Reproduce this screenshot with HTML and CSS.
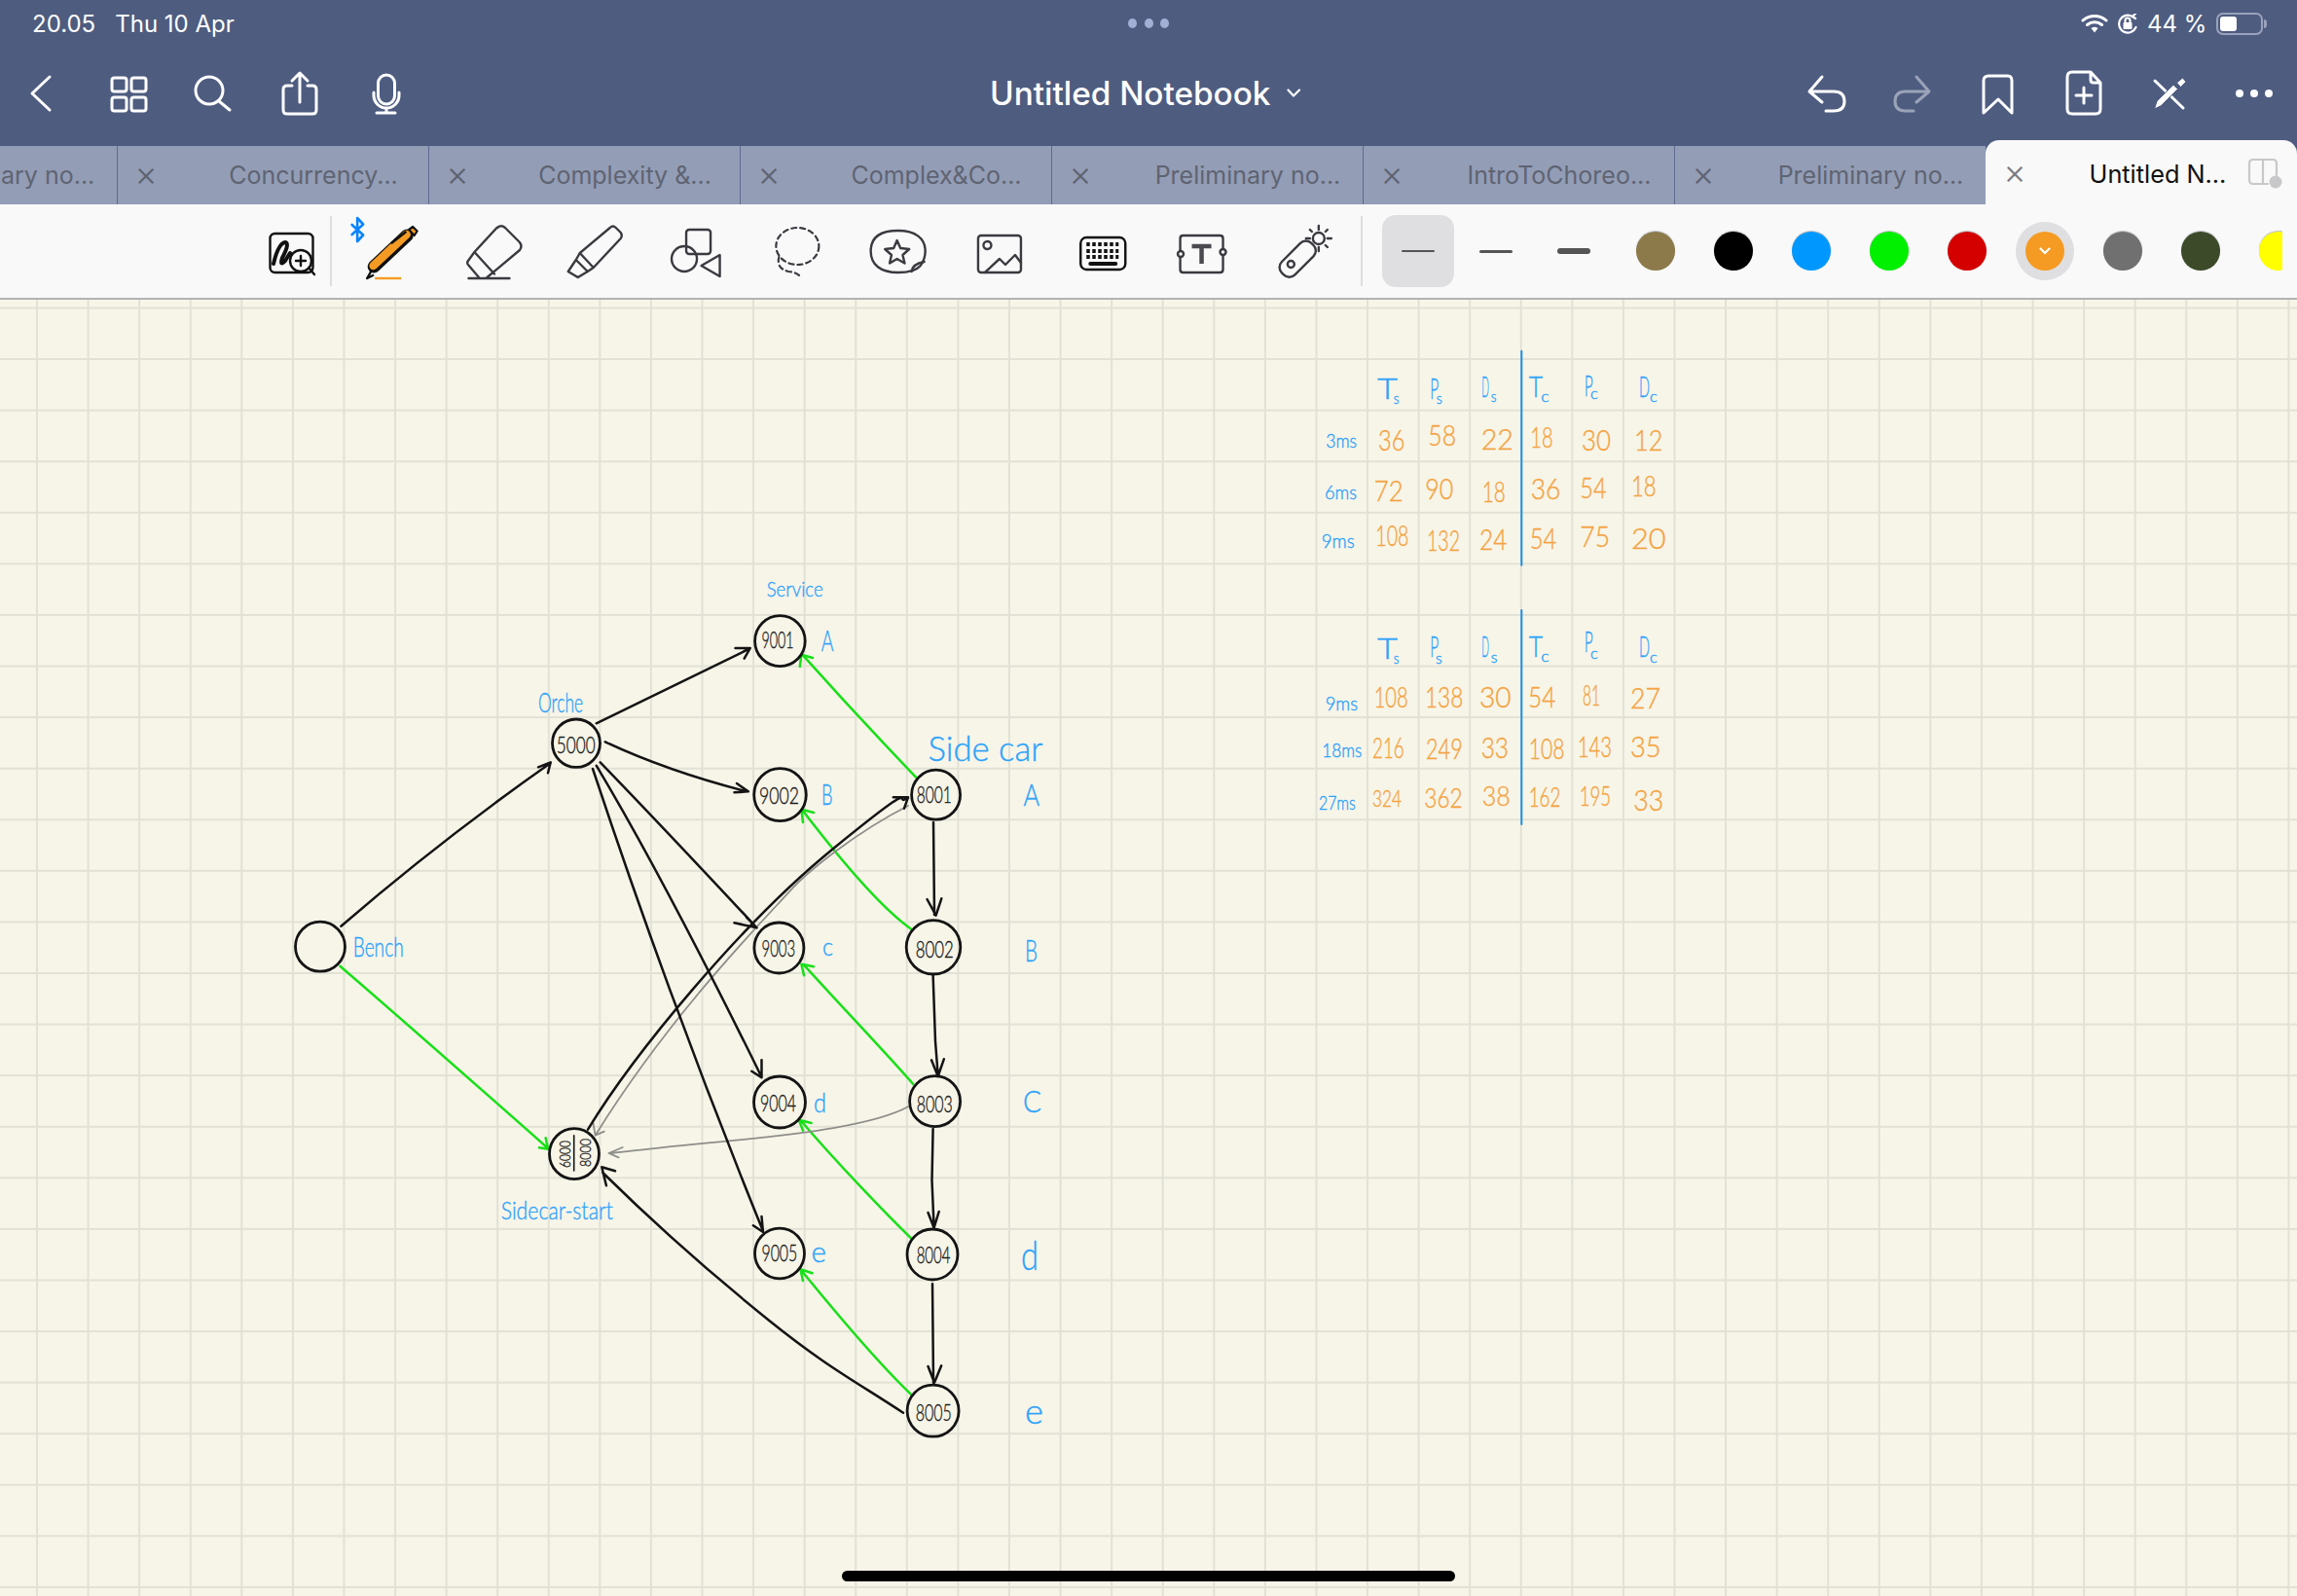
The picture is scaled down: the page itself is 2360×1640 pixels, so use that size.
FILE: index.html
```html
<!DOCTYPE html>
<html lang="en">
<head>
    <meta charset="UTF-8">
    <title>Untitled Notebook</title>
    <link rel="stylesheet" href="styles.css">
</head>
<body>
<div class="app">
    <header class="header">
        <div class="status">
            <div class="status-time"><span>20.05</span><span>Thu 10 Apr</span></div>
            <div class="status-dots"><i></i><i></i><i></i></div>
            <div class="status-right">
                <svg class="st-wifi" viewBox="2139 14 28 20"><path d="M2141 21a18 18 0 0 1 24 0M2145.500 25.500a11.500 11.500 0 0 1 15 0" class="ic-w3"/><path d="M2149.500 29a6 6 0 0 1 7 0l-3.500 4.500z" class="ic-fill"/></svg>
                <svg class="st-lock" viewBox="2176 13 22 21"><path d="M2192 16a9 9 0 1 0 3.500 11" class="ic-w2"/><path d="M2195 18l-3-2 3-3" class="ic-w2"/><rect x="2182.500" y="22" width="9" height="7" rx="1" class="ic-fill"/><path d="M2184.500 22v-2a2.500 2.500 0 0 1 5 0v2" class="ic-w2"/></svg>
                <span class="st-pct">44 %</span>
                <div class="battery"><div class="battery-fill"></div></div>
                <div class="battery-tip"></div>
            </div>
        </div>
        <nav class="nav">
            <div class="nav-group nav-left">
                <div class="nav-slot"><svg viewBox="18 66 48 60"><path d="M51 79L33 96l18 17" class="ic-w3"/></svg></div>
                <div class="nav-slot"><svg viewBox="106 66 48 60"><rect x="115" y="80" width="15" height="14" rx="2.500" class="ic-w3"/><rect x="135" y="80" width="15" height="14" rx="2.500" class="ic-w3"/><rect x="115" y="100" width="15" height="14" rx="2.500" class="ic-w3"/><rect x="135" y="100" width="15" height="14" rx="2.500" class="ic-w3"/></svg></div>
                <div class="nav-slot"><svg viewBox="194 66 48 60"><circle cx="215" cy="93" r="14" class="ic-w3"/><path d="M225 104l11 9" class="ic-w3"/></svg></div>
                <div class="nav-slot"><svg viewBox="282 66 48 60"><path d="M300 88h-5q-4 0-4 4v21q0 4 4 4h26q4 0 4-4V92q0-4-4-4h-5M308 105V76M300 83l8-8 8 8" class="ic-w3"/></svg></div>
                <div class="nav-slot"><svg viewBox="370 66 48 60"><rect x="388.500" y="77" width="17" height="30" rx="8.500" class="ic-w3"/><path d="M384 95v3a13 13 0 0 0 26 0v-3M397 111v5M387 116h19" class="ic-w3"/></svg></div>
            </div>
            <div class="nav-title"><span>Untitled Notebook</span><svg viewBox="1322 91 16 10"><path d="M1323.500 92.500l5.500 6 6-6" class="ic-w2"/></svg></div>
            <div class="nav-group nav-right">
                <div class="nav-slot"><svg viewBox="1852 66 48 60"><path d="M1872 79l-13 15 13 11M1859 94h25q11 0 11 10t-11 10h-8" class="ic-w3"/></svg></div>
                <div class="nav-slot"><svg viewBox="1940 66 48 60"><path d="M1969 79l13 15-13 11M1982 94h-24q-11 0-11 10t11 10h8" class="ic-w3 ic-dim"/></svg></div>
                <div class="nav-slot"><svg viewBox="2028 66 48 60"><path d="M2038 116V83q0-5 5-5h20q4 0 4 5v33l-14-14z" class="ic-w3"/></svg></div>
                <div class="nav-slot"><svg viewBox="2116 66 48 60"><path d="M2148 74h-19q-5 0-5 5v33q0 5 5 5h24q5 0 5-5V85zM2148 74v8q0 3 3 3h7M2141 90v16M2133 98h16" class="ic-w3"/></svg></div>
                <div class="nav-slot"><svg viewBox="2204 66 48 60"><path d="M2214 83l29 28" class="ic-w3"/><path d="M2213.500 112l2.500-8 17-17 4.500 4.500-17 17zM2236.500 85l6-5 3.500 4-5.500 5.500z" class="ic-pencil"/></svg></div>
                <div class="nav-slot"><svg viewBox="2292 66 48 60"><circle cx="2301" cy="96" r="4" class="ic-fill"/><circle cx="2316" cy="96" r="4" class="ic-fill"/><circle cx="2331" cy="96" r="4" class="ic-fill"/></svg></div>
            </div>
        </nav>
        <div class="tabs">
            <div class="tab"><span class="tab-x">×</span><span class="tab-name">Preliminary no...</span></div>
            <div class="tab"><span class="tab-x">×</span><span class="tab-name">Concurrency...</span></div>
            <div class="tab"><span class="tab-x">×</span><span class="tab-name">Complexity &amp;...</span></div>
            <div class="tab"><span class="tab-x">×</span><span class="tab-name">Complex&amp;Co...</span></div>
            <div class="tab"><span class="tab-x">×</span><span class="tab-name">Preliminary no...</span></div>
            <div class="tab"><span class="tab-x">×</span><span class="tab-name">IntroToChoreo...</span></div>
            <div class="tab"><span class="tab-x">×</span><span class="tab-name">Preliminary no...</span></div>
            <div class="tab tab-active">
                <span class="tab-x">×</span><span class="tab-name">Untitled N...</span>
                <svg class="tab-split" viewBox="2309 161 36 34"><path d="M2330 189h-15q-4 0-4-4v-17q0-4 4-4h20q4 0 4 4v12M2325 164v25" class="ic-gray"/><circle cx="2338" cy="187" r="6.500" class="ic-grayfill"/></svg>
            </div>
        </div>
    </header>

    <div class="toolbar">
        <div class="tool tool-first"><svg viewBox="269 222 60 72"><rect x="277.500" y="240" width="44" height="40" rx="5" class="ic-black"/><path d="M281 271q5-21 12-22 5 1-3 16-3 9 3 3l5-8" class="ic-scribble"/><circle cx="309" cy="268" r="11" class="ic-lens"/><path d="M318 276l5 6M304 268h10M309 263v10" class="ic-black"/></svg></div>
        <div class="tool tool-pen"><svg viewBox="359.850 222 90 72">
            <path d="M361.500 231L373 241.500 367 248V224l6 6.500-11.500 10.500" class="ic-bt"/>
            <path d="M384 274l34-32" class="pen-edge"/><path d="M383.500 273l34-32" class="pen-body"/>
            <path d="M420 236l4-3 4.500 4.500-3 4.500z" class="pen-cap"/><path d="M402.500 249.500l14-11" class="ic-black"/>
            <path d="M381 279l-4 7 6-3" class="ic-black"/><path d="M385 286h27" class="pen-line"/></svg></div>
        <div class="tool"><svg viewBox="478.550 222 60 72"><path d="M510.500 234q4-3.500 8 0l15 15q3 4 0 8L500 285M487 259l23-25M487 259l20.500 22.500M487 259l-6.500 9q-1.500 2 0 4l11 13M481 286h42" class="ic-dark"/></svg></div>
        <div class="tool"><svg viewBox="582.250 222 60 72"><path d="M627 234q3-3 6 0l5 5q2 3 0 6l-28 30-14-15zM596 260l-4 7 12 12 6-4M592 267l-8 12 10 6 10-6" class="ic-dark"/></svg></div>
        <div class="tool"><svg viewBox="685.950 222 60 72"><rect x="705" y="236" width="25" height="25" rx="3" class="ic-dark"/><circle cx="703" cy="266" r="13" class="ic-dark"/><path d="M739.500 262v22l-19-11z" class="ic-dark"/></svg></div>
        <div class="tool"><svg viewBox="789.650 222 60 72"><ellipse cx="819" cy="253" rx="22" ry="19" class="ic-dash"/><path d="M800 264q-3 12 10 15 10 1 13 7" class="ic-dash"/></svg></div>
        <div class="tool"><svg viewBox="893.350 222 60 72"><path d="M923 237c18 0 28 8 28 21 0 7-2 11-5 15-4 5-12 7-23 7-18 0-28-8-28-22s10-21 28-21z" class="ic-dark"/><path d="M937 279q1-8 13-10M922 247l3.500 8 9 1-6.700 6 2 8.500-7.800-4.500-7.600 4.500 1.900-8.500-6.700-6 8.900-1z" class="ic-dark"/></svg></div>
        <div class="tool"><svg viewBox="997.050 222 60 72"><rect x="1005" y="242" width="44" height="38" rx="3" class="ic-dark"/><circle cx="1014.500" cy="252" r="4" class="ic-dark"/><path d="M1012 280l15-14 6 6 10-10 6 8" class="ic-dark"/></svg></div>
        <div class="tool"><svg viewBox="1100.750 222 60 72"><rect x="1110" y="244" width="46" height="33" rx="6" class="ic-black"/><path d="M1116 251h33M1116 258h33M1116 264h33" class="ic-keys"/><path d="M1120 271h26" class="ic-spacebar"/></svg></div>
        <div class="tool"><svg viewBox="1204.450 222 60 72"><path d="M1213 257v-12q0-3 3-3h38q3 0 3 3v10M1213 265v12q0 3 3 3h38q3 0 3-3v-14" class="ic-dark"/><circle cx="1213.500" cy="261" r="3" class="ic-dark"/><circle cx="1257" cy="259" r="3" class="ic-dark"/><path d="M1225 253h20M1235 253v18" class="ic-tee"/></svg></div>
        <div class="tool tool-last"><svg viewBox="1308.150 222 60 72"><rect x="1312" y="257" width="43" height="19" rx="8" transform="rotate(-45 1333 266.500)" class="ic-dark"/><circle cx="1326.500" cy="271.500" r="3.500" class="ic-dark"/><circle cx="1355" cy="245" r="6" class="ic-dark"/><path d="M1355 232v4M1355 254v4M1342 245h4M1364 245h4M1346 236l2 2M1362 252l2 2M1364 236l-2 2" class="ic-dark"/></svg></div>
        <div class="line-pick line-on"><i class="line-1"></i></div>
        <div class="line-pick"><i class="line-2"></i></div>
        <div class="line-pick"><i class="line-3"></i></div>
        <div class="colors">
            <div class="color"><i class="c-brown"></i></div>
            <div class="color"><i class="c-black"></i></div>
            <div class="color"><i class="c-blue"></i></div>
            <div class="color"><i class="c-green"></i></div>
            <div class="color"><i class="c-red"></i></div>
            <div class="color color-on"><i class="c-orange"><svg viewBox="0 0 12 8"><path d="M1.500 1.500L6 6l4.500-4.500" class="ic-w2"/></svg></i></div>
            <div class="color"><i class="c-gray"></i></div>
            <div class="color"><i class="c-olive"></i></div>
            <div class="color"><i class="c-yellow"></i></div>
        </div>
    </div>

    <main class="page">
        <svg class="sheet" viewBox="0 308 2360 1332">
            <!-- green replies -->
            <g class="ink-green">
                <path d="M349.400 992.700Q425 1058 563 1180M554 1179.300l9.200 1.400-2.600-11.400"/>
                <path d="M941.700 799.300Q882.600 737.700 825 673.300M821.800 685l1.600-12.300L835 676"/>
                <path d="M936.600 955C915 940 880 905 825 833.300M825 845l-1.600-13.300L836 835"/>
                <path d="M938.200 1114C915 1087 870 1040 826 991.700M826 1002.300l-2.600-11.600L836 993.300"/>
                <path d="M937 1273.300C910 1247 860 1195 823 1151.700M825 1161.700l-4.200-11L833.600 1154"/>
                <path d="M936.600 1433.300C912 1410 880 1375 823 1305M825 1316l-2.600-11.700L834.600 1308.300"/>
            </g>
            <!-- gray -->
            <g class="ink-gray">
                <path d="M933 828C880 855 830 895 810.600 916.700S690 1040 611.600 1166.700M609 1151.700l2.600 15 9.200-4"/>
                <path d="M933 1137.300C900 1155 830 1165 739 1173.300S660 1182 627 1185M639.700 1179l-14.300 6 10.200 4.300"/>
            </g>
            <!-- black arrows -->
            <g class="ink-black">
                <path d="M350.400 951.700Q452 864 565.700 784M553 788.300l12.700-5-2.700 11"/>
                <path d="M612.700 743.300Q690 706 769.800 666.700M755.500 666h15.300l-6.100 10.700"/>
                <path d="M621.800 762.300Q685.500 792.200 767.200 813.300M757 805l11.800 8.300-14.300 1"/>
                <path d="M616.700 783.300Q682.900 851.700 777.500 953.300M767 942.700l10.500 10.600-23-5"/>
                <path d="M612.700 786.700Q682.400 903.300 782.500 1106.700M772.300 1100.700l10.200 6.600v-18"/>
                <path d="M609 790Q689.500 1032.500 784 1265M773.900 1259.300L784 1266l-1.500-16"/>
                <path d="M604 1160.700C650 1085 760 950 856.500 871.700S915 830 933 820M917.800 819.300H933l-4 11.400"/>
                <path d="M928 1451.700C880 1420 850 1405 790 1356.700S670 1255 619.300 1205M632 1203.300l-13.700-4 4.600 19"/>
                <path d="M959 845L960 940M952.500 924l9.100 16.700 5.700-17.400"/>
                <path d="M958.600 1001.700L961 1070L963.700 1105M957 1089.300l6.700 16.700 6.100-17.700"/>
                <path d="M958.600 1160L957.500 1213L959.600 1261.700M953.500 1246l6.100 15.700 5.100-16.700"/>
                <path d="M958 1319.300L959 1420.700M953.500 1404l6.500 16.700 7.200-17.400"/>
            </g>
            <!-- nodes -->
            <g class="node">
                <ellipse cx="329" cy="972.700" rx="25.500" ry="25.500"/>
                <ellipse cx="592" cy="763.700" rx="24.500" ry="24.700"/>
                <ellipse cx="590" cy="1185.700" rx="25.500" ry="26"/>
                <path class="node-split" d="M589.700 1166.700V1203"/>
                <ellipse cx="801.400" cy="658.700" rx="25.800" ry="26"/>
                <ellipse cx="801.500" cy="816.700" rx="26.800" ry="27"/>
                <ellipse cx="800.400" cy="974" rx="25.500" ry="26"/>
                <ellipse cx="801" cy="1132.500" rx="26.500" ry="26.500"/>
                <ellipse cx="801" cy="1288" rx="25.500" ry="25.800"/>
                <ellipse cx="961.600" cy="816.700" rx="25" ry="25.500"/>
                <ellipse cx="959" cy="973.300" rx="27.800" ry="27.700"/>
                <ellipse cx="960.600" cy="1131.700" rx="26" ry="26"/>
                <ellipse cx="958" cy="1289" rx="26" ry="26"/>
                <ellipse cx="958.600" cy="1449.700" rx="26.500" ry="26.500"/>
            </g>
            <g class="hand hand-black hand-24">
                <text x="782.600" y="666" textLength="33" lengthAdjust="spacingAndGlyphs">9001</text>
                <text x="780" y="826" textLength="41" lengthAdjust="spacingAndGlyphs">9002</text>
                <text x="782.500" y="982.700" textLength="34.700" lengthAdjust="spacingAndGlyphs">9003</text>
                <text x="781" y="1141.700" textLength="37" lengthAdjust="spacingAndGlyphs">9004</text>
                <text x="782.500" y="1295.700" textLength="36.700" lengthAdjust="spacingAndGlyphs">9005</text>
                <text x="571.800" y="774" textLength="39.800" lengthAdjust="spacingAndGlyphs">5000</text>
                <text x="941.700" y="825" textLength="36" lengthAdjust="spacingAndGlyphs">8001</text>
                <text x="940.700" y="984.300" textLength="39" lengthAdjust="spacingAndGlyphs">8002</text>
                <text x="941.700" y="1142.700" textLength="37" lengthAdjust="spacingAndGlyphs">8003</text>
                <text x="941.700" y="1298.300" textLength="34.700" lengthAdjust="spacingAndGlyphs">8004</text>
                <text x="940.700" y="1460" textLength="37" lengthAdjust="spacingAndGlyphs">8005</text>
            </g>
            <g class="hand hand-black hand-15">
                <text transform="rotate(-90 586 1200)" x="586" y="1200" textLength="28" lengthAdjust="spacingAndGlyphs">6000</text>
                <text transform="rotate(-90 606.500 1199)" x="606.500" y="1199" textLength="29" lengthAdjust="spacingAndGlyphs">8000</text>
            </g>
            <!-- labels -->
            <g class="hand hand-blue">
                <text class="hand-22" x="787.700" y="613" textLength="58" lengthAdjust="spacingAndGlyphs">Service</text>
                <text class="hand-28" x="553" y="732" textLength="46" lengthAdjust="spacingAndGlyphs">Orche</text>
                <text class="hand-36" x="953.500" y="782" textLength="118" lengthAdjust="spacingAndGlyphs">Side car</text>
                <text class="hand-28" x="362.700" y="983" textLength="52" lengthAdjust="spacingAndGlyphs">Bench</text>
                <text class="hand-26" x="514.700" y="1253" textLength="115" lengthAdjust="spacingAndGlyphs">Sidecar-start</text>
                <text class="hand-30" x="843.800" y="669" textLength="12.700" lengthAdjust="spacingAndGlyphs">A</text>
                <text class="hand-30" x="844" y="827" textLength="11.500" lengthAdjust="spacingAndGlyphs">B</text>
                <text class="hand-26" x="845" y="982" textLength="11" lengthAdjust="spacingAndGlyphs">c</text>
                <text class="hand-28" x="836" y="1143" textLength="13" lengthAdjust="spacingAndGlyphs">d</text>
                <text class="hand-30" x="833.600" y="1297" textLength="15.400" lengthAdjust="spacingAndGlyphs">e</text>
                <text class="hand-32" x="1051.400" y="828" textLength="16.600" lengthAdjust="spacingAndGlyphs">A</text>
                <text class="hand-32" x="1053" y="988" textLength="13" lengthAdjust="spacingAndGlyphs">B</text>
                <text class="hand-32" x="1051" y="1143" textLength="19" lengthAdjust="spacingAndGlyphs">C</text>
                <text class="hand-42" x="1049" y="1305" textLength="18" lengthAdjust="spacingAndGlyphs">d</text>
                <text class="hand-36" x="1053" y="1463" textLength="19" lengthAdjust="spacingAndGlyphs">e</text>
            </g>
            <!-- tables -->
            <path class="ink-rule" d="M1563.300 360.700V580.700M1563.300 627V847"/>
            <g class="hand hand-blue hand-30">
                <text><tspan x="1415" y="410" textLength="21" lengthAdjust="spacingAndGlyphs">T</tspan><tspan class="hand-15" x="1431.700" y="415" textLength="5.700" lengthAdjust="spacingAndGlyphs">s</tspan></text>
                <text><tspan x="1469.300" y="410" textLength="9" lengthAdjust="spacingAndGlyphs">P</tspan><tspan class="hand-15" x="1475.700" y="415" textLength="6" lengthAdjust="spacingAndGlyphs">s</tspan></text>
                <text><tspan x="1522.300" y="408.300" textLength="7.700" lengthAdjust="spacingAndGlyphs">D</tspan><tspan class="hand-15" x="1531.700" y="413.300" textLength="5.700" lengthAdjust="spacingAndGlyphs">s</tspan></text>
                <text><tspan x="1570.700" y="408.300" textLength="14.300" lengthAdjust="spacingAndGlyphs">T</tspan><tspan class="hand-15" x="1583.300" y="413.300" textLength="8.300" lengthAdjust="spacingAndGlyphs">c</tspan></text>
                <text><tspan x="1627.700" y="406.700" textLength="9" lengthAdjust="spacingAndGlyphs">P</tspan><tspan class="hand-15" x="1634" y="410" textLength="7.700" lengthAdjust="spacingAndGlyphs">c</tspan></text>
                <text><tspan x="1684" y="408.300" textLength="11" lengthAdjust="spacingAndGlyphs">D</tspan><tspan class="hand-15" x="1695" y="413.300" textLength="7.700" lengthAdjust="spacingAndGlyphs">c</tspan></text>
                <text><tspan x="1415" y="676.700" textLength="21" lengthAdjust="spacingAndGlyphs">T</tspan><tspan class="hand-15" x="1431.700" y="681.700" textLength="5.700" lengthAdjust="spacingAndGlyphs">s</tspan></text>
                <text><tspan x="1469.300" y="675" textLength="9" lengthAdjust="spacingAndGlyphs">P</tspan><tspan class="hand-15" x="1475" y="681.700" textLength="6.700" lengthAdjust="spacingAndGlyphs">s</tspan></text>
                <text><tspan x="1522.300" y="675" textLength="7.700" lengthAdjust="spacingAndGlyphs">D</tspan><tspan class="hand-15" x="1531.700" y="680.700" textLength="6.700" lengthAdjust="spacingAndGlyphs">s</tspan></text>
                <text><tspan x="1570.700" y="675" textLength="14.300" lengthAdjust="spacingAndGlyphs">T</tspan><tspan class="hand-15" x="1583.300" y="680" textLength="8.300" lengthAdjust="spacingAndGlyphs">c</tspan></text>
                <text><tspan x="1627.700" y="670" textLength="9" lengthAdjust="spacingAndGlyphs">P</tspan><tspan class="hand-15" x="1634" y="677.300" textLength="7.700" lengthAdjust="spacingAndGlyphs">c</tspan></text>
                <text><tspan x="1684" y="675" textLength="11" lengthAdjust="spacingAndGlyphs">D</tspan><tspan class="hand-15" x="1695" y="680.700" textLength="7.700" lengthAdjust="spacingAndGlyphs">c</tspan></text>
            </g>
            <g class="hand hand-blue hand-20">
                <text x="1362.300" y="460" textLength="31.700" lengthAdjust="spacingAndGlyphs">3ms</text>
                <text x="1361" y="513.300" textLength="33" lengthAdjust="spacingAndGlyphs">6ms</text>
                <text x="1357.700" y="563.300" textLength="34" lengthAdjust="spacingAndGlyphs">9ms</text>
                <text x="1361.700" y="730" textLength="33.300" lengthAdjust="spacingAndGlyphs">9ms</text>
                <text x="1358.300" y="778.300" textLength="41" lengthAdjust="spacingAndGlyphs">18ms</text>
                <text x="1355" y="831.700" textLength="37.700" lengthAdjust="spacingAndGlyphs">27ms</text>
            </g>
            <g class="hand hand-orange hand-30">
                <text x="1416" y="463.300" textLength="27.300" lengthAdjust="spacingAndGlyphs">36</text>
                <text x="1467.300" y="458.300" textLength="28.700" lengthAdjust="spacingAndGlyphs">58</text>
                <text x="1521.700" y="461.700" textLength="33.300" lengthAdjust="spacingAndGlyphs">22</text>
                <text x="1572.300" y="460" textLength="23.300" lengthAdjust="spacingAndGlyphs">18</text>
                <text x="1625" y="463.300" textLength="30" lengthAdjust="spacingAndGlyphs">30</text>
                <text x="1679" y="463.300" textLength="29.300" lengthAdjust="spacingAndGlyphs">12</text>
                <text x="1411.700" y="515" textLength="30" lengthAdjust="spacingAndGlyphs">72</text>
                <text x="1464.300" y="513.300" textLength="29" lengthAdjust="spacingAndGlyphs">90</text>
                <text x="1522.700" y="515.700" textLength="24" lengthAdjust="spacingAndGlyphs">18</text>
                <text x="1572.700" y="513.300" textLength="30.700" lengthAdjust="spacingAndGlyphs">36</text>
                <text x="1623.300" y="511.700" textLength="27.300" lengthAdjust="spacingAndGlyphs">54</text>
                <text x="1676" y="510" textLength="25.700" lengthAdjust="spacingAndGlyphs">18</text>
                <text x="1413.300" y="560.700" textLength="34" lengthAdjust="spacingAndGlyphs">108</text>
                <text x="1466" y="566" textLength="34" lengthAdjust="spacingAndGlyphs">132</text>
                <text x="1520" y="565" textLength="28.300" lengthAdjust="spacingAndGlyphs">24</text>
                <text x="1571.700" y="564.300" textLength="27.700" lengthAdjust="spacingAndGlyphs">54</text>
                <text x="1623.300" y="561.700" textLength="30.700" lengthAdjust="spacingAndGlyphs">75</text>
                <text x="1676" y="564.300" textLength="35.700" lengthAdjust="spacingAndGlyphs">20</text>
                <text x="1411.700" y="726.700" textLength="35" lengthAdjust="spacingAndGlyphs">108</text>
                <text x="1464" y="726.700" textLength="39.300" lengthAdjust="spacingAndGlyphs">138</text>
                <text x="1520" y="727.300" textLength="32.700" lengthAdjust="spacingAndGlyphs">30</text>
                <text x="1570" y="727.300" textLength="28.300" lengthAdjust="spacingAndGlyphs">54</text>
                <text x="1626" y="725" textLength="18" lengthAdjust="spacingAndGlyphs">81</text>
                <text x="1675" y="728.300" textLength="31" lengthAdjust="spacingAndGlyphs">27</text>
                <text x="1410" y="779.300" textLength="32.700" lengthAdjust="spacingAndGlyphs">216</text>
                <text x="1465" y="780" textLength="37.700" lengthAdjust="spacingAndGlyphs">249</text>
                <text x="1521.700" y="779.300" textLength="28.300" lengthAdjust="spacingAndGlyphs">33</text>
                <text x="1570.700" y="780" textLength="36.700" lengthAdjust="spacingAndGlyphs">108</text>
                <text x="1620.700" y="778.300" textLength="35.300" lengthAdjust="spacingAndGlyphs">143</text>
                <text x="1675" y="778.300" textLength="31.700" lengthAdjust="spacingAndGlyphs">35</text>
                <text class="hand-24" x="1410" y="829.300" textLength="30" lengthAdjust="spacingAndGlyphs">324</text>
                <text class="hand-28" x="1463.300" y="830" textLength="39.300" lengthAdjust="spacingAndGlyphs">362</text>
                <text class="hand-28" x="1522.700" y="828.300" textLength="29" lengthAdjust="spacingAndGlyphs">38</text>
                <text class="hand-28" x="1570.700" y="829.300" textLength="32.700" lengthAdjust="spacingAndGlyphs">162</text>
                <text class="hand-28" x="1622.700" y="828.300" textLength="32.300" lengthAdjust="spacingAndGlyphs">195</text>
                <text x="1678.300" y="833.300" textLength="31" lengthAdjust="spacingAndGlyphs">33</text>
            </g>
        </svg>
        <div class="home-bar"></div>
    </main>
</div>
</body>
</html>
```

FILE: styles.css
```css
* {
    box-sizing: border-box;
}
body {
    margin: 0;
    font-family: Inter, "Noto Sans", sans-serif;
    background: #f7f5e8;
}
.app {
    width: 2360px;
    height: 1640px;
    display: flex;
    flex-direction: column;
    overflow: hidden;
}

/* header */
.header {
    background: #4e5c80;
    color: #fff;
    flex: none;
}
.status {
    height: 48px;
    display: flex;
    align-items: center;
    justify-content: space-between;
    padding: 0 31px 0 33px;
    position: relative;
    font-size: 24px;
}
.status-time {
    display: flex;
    gap: 20px;
}
.status-dots {
    position: absolute;
    left: 1159px;
    top: 19px;
    display: flex;
    gap: 7.500px;
}
.status-dots i {
    width: 9px;
    height: 10px;
    border-radius: 50%;
    background: #a3b0d5;
}
.status-right {
    display: flex;
    align-items: center;
}
.st-wifi {
    width: 28px;
    height: 20px;
}
.st-lock {
    width: 22px;
    height: 21px;
    margin-left: 9px;
}
.st-pct {
    margin-left: 9px;
    width: 62px;
    white-space: nowrap;
}
.battery {
    width: 48px;
    height: 23px;
    margin-left: 9px;
    border: 2px solid #98a2ba;
    border-radius: 7px;
    padding: 2px;
}
.battery-fill {
    width: 17px;
    height: 15px;
    border-radius: 3px;
    background: #fff;
}
.battery-tip {
    width: 3px;
    height: 9px;
    margin-left: 1px;
    border-radius: 0 3px 3px 0;
    background: #98a2ba;
}
.nav {
    height: 96px;
    display: flex;
    align-items: center;
    justify-content: space-between;
    position: relative;
}
.nav-group {
    display: flex;
}
.nav-left {
    margin-left: -2px;
}
.nav-slot {
    width: 88px;
    height: 60px;
    display: flex;
    justify-content: center;
}
.nav-slot svg {
    width: 48px;
    height: 60px;
}
.nav-title {
    position: absolute;
    left: 1017px;
    top: 28px;
    display: flex;
    align-items: center;
    gap: 17px;
    font-size: 33.300px;
    font-weight: 500;
}
.nav-title svg {
    width: 16px;
    height: 10px;
}

/* tabs */
.tabs {
    height: 66px;
    padding-top: 6px;
    display: flex;
    justify-content: flex-end;
    overflow: hidden;
}
.tab {
    flex: none;
    width: 320px;
    height: 60px;
    display: flex;
    align-items: center;
    background: #939db6;
    border-left: 1px solid #5d6b90;
    color: #5f6472;
    font-size: 25px;
}
.tab-x {
    width: 58px;
    padding-bottom: 5px;
    text-align: center;
    font-size: 36px;
    font-weight: 300;
    line-height: 1;
}
.tab-name {
    flex: 1;
    text-align: center;
    padding-left: 25px;
    white-space: nowrap;
}
.tab-active {
    height: 66px;
    margin-top: -6px;
    padding-top: 2px;
    background: #f9f9f9;
    border-left: 0;
    border-radius: 14px 14px 0 0;
    color: #111;
}
.tab-active .tab-x {
    width: 60px;
    color: #7c7c80;
}
.tab-active .tab-name {
    color: #111;
    font-size: 25.300px;
}
.tab-split {
    width: 36px;
    height: 34px;
    margin-right: 15px;
}

/* toolbar */
.toolbar {
    height: 98px;
    flex: none;
    display: flex;
    align-items: center;
    background: #f9f9f9;
    border-bottom: 2px solid #b3b3b3;
    padding-left: 247px;
}
.tool {
    flex: none;
    width: 103.700px;
    height: 72px;
    display: flex;
    justify-content: center;
}
.tool svg {
    width: 60px;
    height: 72px;
    flex: none;
    overflow: visible;
}
.tool-first {
    width: 94px;
    border-right: 2px solid #dedede;
    justify-content: flex-start;
    padding-left: 22px;
}
.tool-pen svg {
    width: 90px;
}
.tool-pen {
    margin-left: 12px;
}
.tool-last {
    margin-right: 8px;
    position: relative;
}
.tool-last::after {
    content: "";
    position: absolute;
    right: -10px;
    top: 0;
    width: 2px;
    height: 72px;
    background: #dedede;
}
.line-pick {
    flex: none;
    width: 74px;
    height: 74px;
    margin-left: 6px;
    display: flex;
    align-items: center;
    justify-content: center;
    border-radius: 14px;
}
.line-on {
    background: #dfdfe1;
    margin-left: 22px;
}
.line-pick i {
    width: 34px;
    background: #555;
    border-radius: 3px;
}
.line-1 {
    height: 2px;
}
.line-2 {
    height: 3px;
}
.line-3 {
    height: 6px;
}
.colors {
    width: 684px;
    margin-left: 7px;
    display: flex;
    overflow: hidden;
}
.color {
    flex: none;
    width: 80px;
    height: 60px;
    display: flex;
    align-items: center;
    justify-content: center;
}
.color i {
    width: 40px;
    height: 40px;
    border-radius: 50%;
    box-shadow: 0 -1px 1px #bdbdbd;
    display: flex;
    align-items: center;
    justify-content: center;
}
.color i svg {
    width: 12px;
    height: 8px;
}
.color-on {
    position: relative;
}
.color-on::before {
    content: "";
    position: absolute;
    left: 10px;
    top: 0;
    width: 60px;
    height: 60px;
    border-radius: 50%;
    background: #dfdfe1;
}
.color-on i {
    position: relative;
    box-shadow: none;
}
.c-brown { background: #8c7a4a; }
.c-black { background: #000; }
.c-blue { background: #0098ff; }
.c-green { background: #00f000; }
.c-red { background: #d40000; }
.c-orange { background: #f59b23; }
.c-gray { background: #707070; }
.c-olive { background: #3c4a2a; }
.c-yellow { background: #ffff00; }

/* icon strokes */
.ic-w3, .ic-w2, .ic-gray, .ic-black, .ic-dark, .ic-dash, .ic-bt, .ic-scribble, .ic-keys, .ic-spacebar, .ic-tee {
    fill: none;
    stroke-linecap: round;
    stroke-linejoin: round;
}
.ic-w3 {
    stroke: #fff;
    stroke-width: 3;
}
.ic-w2 {
    stroke: #fff;
    stroke-width: 2.200;
}
.ic-dim {
    stroke: #9aa3b8;
}
.ic-fill {
    fill: #fff;
}
.ic-pencil {
    fill: #fff;
    stroke: #4e5c80;
    stroke-width: 1;
    stroke-linejoin: round;
}
.ic-gray {
    stroke: #c8c8ca;
    stroke-width: 2.200;
}
.ic-grayfill {
    fill: #c8c8ca;
}
.ic-black {
    stroke: #111;
    stroke-width: 2.400;
}
.ic-dark {
    stroke: #3a3a40;
    stroke-width: 2.400;
}
.ic-dash {
    stroke: #3a3a40;
    stroke-width: 2.200;
    stroke-dasharray: 5 4;
}
.ic-bt {
    stroke: #0a84ff;
    stroke-width: 2.600;
}
.ic-scribble {
    stroke: #111;
    stroke-width: 4;
}
.ic-lens {
    fill: #f9f9f9;
    stroke: #111;
    stroke-width: 2.400;
}
.ic-keys {
    stroke: #111;
    stroke-width: 4;
    stroke-linecap: butt;
    stroke-dasharray: 3.500 2.500;
}
.ic-spacebar {
    stroke: #111;
    stroke-width: 4;
}
.ic-tee {
    stroke: #4a4a50;
    stroke-width: 4.500;
    stroke-linecap: butt;
}
.pen-edge {
    fill: none;
    stroke: #111;
    stroke-width: 13;
    stroke-linecap: round;
}
.pen-body {
    fill: none;
    stroke: #f59b23;
    stroke-width: 8.500;
    stroke-linecap: round;
}
.pen-cap {
    fill: #f59b23;
    stroke: #111;
    stroke-width: 2.200;
    stroke-linejoin: round;
}
.pen-line {
    fill: none;
    stroke: #f59b23;
    stroke-width: 2.400;
}

/* notebook page */
.page {
    flex: 1;
    position: relative;
    background-color: #f7f5e8;
    background-image:
        linear-gradient(90deg, #e2e1d5 2px, transparent 2px),
        linear-gradient(#e2e1d5 2px, transparent 2px);
    background-size: 52.580px 52.580px;
    background-position: 37px 7.500px;
}
.sheet {
    position: absolute;
    left: 0;
    top: 0;
    width: 2360px;
    height: 1332px;
}
.home-bar {
    position: absolute;
    left: 865px;
    bottom: 15px;
    width: 630px;
    height: 11px;
    border-radius: 6px;
    background: #000;
}

/* ink */
.ink-black path, .ink-green path, .ink-gray path, .node ellipse, .node path, .ink-rule {
    fill: none;
    stroke-linecap: round;
    stroke-linejoin: round;
}
.ink-black path {
    stroke: #141414;
    stroke-width: 2.500;
}
.ink-green path {
    stroke: #17e017;
    stroke-width: 2.500;
}
.ink-gray path {
    stroke: #8e8e8a;
    stroke-width: 1.800;
}
.node ellipse {
    stroke: #141414;
    stroke-width: 2.800;
}
.node .node-split {
    stroke: #141414;
    stroke-width: 1.600;
}
.ink-rule {
    stroke: #1a8fe6;
    stroke-width: 2;
}
.hand {
    font-family: Lato, "Open Sans", sans-serif;
    font-weight: 300;
    stroke-width: 0.400;
}
.hand-black { fill: #1c1c1c; stroke: #1c1c1c; }
.hand-blue { fill: #2ea3fa; stroke: #2ea3fa; }
.hand-orange { fill: #f4a341; stroke: #f4a341; }
.hand-15 { font-size: 15px; }
.hand-20 { font-size: 20px; }
.hand-22 { font-size: 22px; }
.hand-24 { font-size: 24px; }
.hand-26 { font-size: 26px; }
.hand-28 { font-size: 28px; }
.hand-30 { font-size: 30px; }
.hand-32 { font-size: 32px; }
.hand-36 { font-size: 36px; }
.hand-42 { font-size: 42px; }
```
